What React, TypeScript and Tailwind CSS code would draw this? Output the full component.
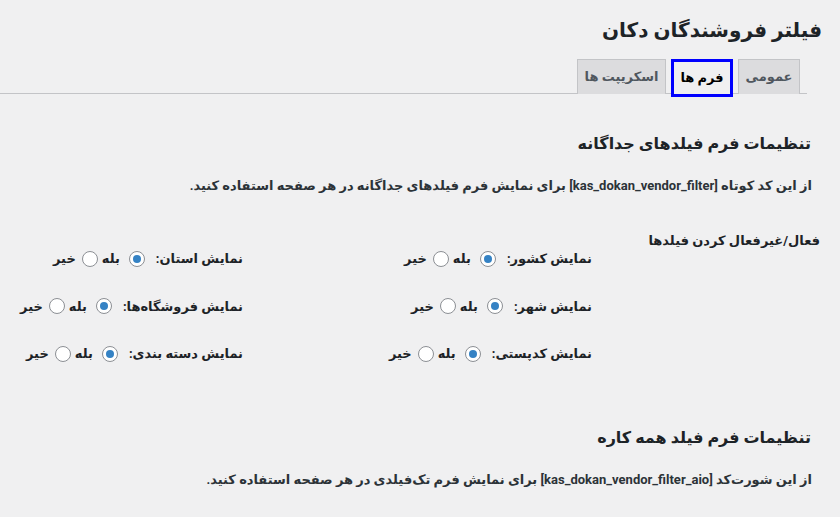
import React from "react";

type Field = { label: string; yes: boolean };

const FIELDS: Field[] = [
  { label: "نمایش کشور:", yes: true },
  { label: "نمایش استان:", yes: true },
  { label: "نمایش شهر:", yes: true },
  { label: "نمایش فروشگاه‌ها:", yes: true },
  { label: "نمایش کدپستی:", yes: true },
  { label: "نمایش دسته بندی:", yes: true },
];

function Radio({ checked }: { checked: boolean }) {
  return (
    <span className="flex h-4 w-4 shrink-0 items-center justify-center rounded-full border border-[#8c8f94] bg-white">
      {checked && <span className="h-2 w-2 rounded-full bg-[#3582c4]" />}
    </span>
  );
}

function FieldRow({ field }: { field: Field }) {
  return (
    <div className="flex h-[47.5px] items-center text-[13px] font-bold text-[#1d2327]">
      <span className="ml-[11px] whitespace-nowrap">{field.label}</span>
      <label className="flex items-center">
        <Radio checked={field.yes} />
        <span className="mr-[9px]">بله</span>
      </label>
      <label className="mr-[4px] flex items-center">
        <Radio checked={!field.yes} />
        <span className="mr-[6px]">خیر</span>
      </label>
    </div>
  );
}

export default function App() {
  return (
    <div
      dir="rtl"
      className="h-[517px] w-[840px] overflow-hidden bg-[#f0f0f1] text-[#1d2327] [font-family:Roboto,'DejaVu_Sans',sans-serif]"
    >
      <h1 className="pr-[18px] pt-[14px] text-[20px] font-bold leading-[32px]">
        فیلتر فروشندگان دکان
      </h1>

      {/* nav-tab-wrapper */}
      <div className="mr-[33px] mt-[13px] flex h-[35px] items-start gap-[5px] border-b border-[#c3c4c7] pr-[7px]">
        <a className="flex h-[35px] w-[62px] items-center justify-center border border-b-0 border-[#c3c4c7] bg-[#dcdcde] text-[13px] font-bold text-[#50575e]">
          عمومی
        </a>
        <a className="z-10 flex h-[38px] w-[62px] items-center justify-center border-[3px] border-[#0000ff] bg-[#f0f0f1] text-[13px] font-bold text-black">
          فرم ها
        </a>
        <a className="flex h-[35px] w-[89px] items-center justify-center border border-b-0 border-[#c3c4c7] bg-[#dcdcde] text-[13px] font-bold text-[#50575e]">
          اسکریپت ها
        </a>
      </div>

      <h2 className="mt-[37px] pr-[29px] text-[16px] font-bold leading-[26px]">
        تنظیمات فرم فیلدهای جداگانه
      </h2>
      <p className="mt-[19px] pr-[28px] text-[13px] font-bold leading-[20px] text-[#2c3338]">
        از این کد کوتاه [kas_dokan_vendor_filter] برای نمایش فرم فیلدهای جداگانه در هر صفحه استفاده کنید.
      </p>

      {/* form-table */}
      <div className="mt-[35px] flex pr-[20px]">
        <div className="w-[228px] shrink-0 text-[13px] font-bold leading-[20px]">
          فعال/غیرفعال کردن فیلدها
        </div>
        <div className="mt-[4px] grid shrink-0 grid-cols-[349px_349px]">
          {FIELDS.map((f) => (
            <FieldRow key={f.label} field={f} />
          ))}
        </div>
      </div>

      <h2 className="mt-[47px] pr-[29px] text-[16px] font-bold leading-[26px]">
        تنظیمات فرم فیلد همه کاره
      </h2>
      <p className="mt-[19px] pr-[28px] text-[13px] font-bold leading-[20px] text-[#2c3338]">
        از این شورت‌کد [kas_dokan_vendor_filter_aio] برای نمایش فرم تک‌فیلدی در هر صفحه استفاده کنید.
      </p>
    </div>
  );
}
